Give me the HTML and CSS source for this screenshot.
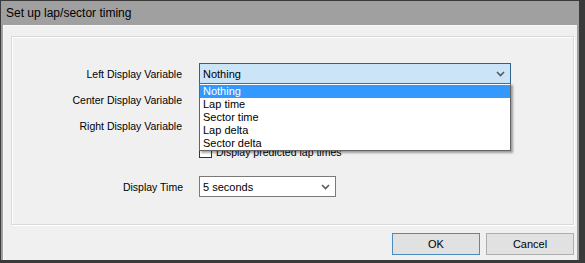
FILE: index.html
```html
<!DOCTYPE html>
<html lang="en">
<head>
	<meta charset="UTF-8">
	<title>Set up lap/sector timing</title>
	<link rel="stylesheet" href="styles.css">
</head>
<body>

<div class="window">
	<div class="title_bar">Set up lap/sector timing</div>
	<div class="client">
		<div class="group_box">
			<div class="form_row">
				<label class="lbl">Left Display Variable</label>
				<div class="combo combo_open">
					<span class="combo_txt">Nothing</span>
					<svg class="chev" width="9" height="6" viewBox="0 0 9 6"><polyline points="1,1 4.5,4.5 8,1" fill="none" stroke="#5a5a5a" stroke-width="1.6"/></svg>
					<!-- open list of the combo -->
					<ul class="drop_list">
						<li class="sel">Nothing</li>
						<li>Lap time</li>
						<li>Sector time</li>
						<li>Lap delta</li>
						<li>Sector delta</li>
					</ul>
				</div>
			</div>
			<!-- these two combos sit under the open list -->
			<div class="form_row">
				<label class="lbl">Center Display Variable</label>
				<div class="combo"></div>
			</div>
			<div class="form_row">
				<label class="lbl">Right Display Variable</label>
				<div class="combo"></div>
			</div>
			<div class="form_row check_row">
				<span class="lbl"></span>
				<div class="check">
					<span class="check_box"></span>
					<span class="check_txt">Display predicted lap times</span>
				</div>
			</div>
			<div class="form_row time_row">
				<label class="lbl">Display Time</label>
				<div class="combo combo_small">
					<span class="combo_txt">5 seconds</span>
					<svg class="chev" width="9" height="6" viewBox="0 0 9 6"><polyline points="1,1 4.5,4.5 8,1" fill="none" stroke="#5a5a5a" stroke-width="1.6"/></svg>
				</div>
			</div>
		</div>
		<div class="btn_row">
			<span class="btn btn_default">OK</span>
			<span class="btn">Cancel</span>
		</div>
	</div>
</div>

</body>
</html>
```

FILE: styles.css
```css
*{margin:0; padding:0; box-sizing:border-box;}
body{ background:#3a3a3a; font-family:"Liberation Sans", Arial, sans-serif; font-size:10.5px; color:#000; }

/*窗口*/
.window{ width:585px; height:263px; background:#a0a0a0; border-style:solid; border-color:#3a3a3a; border-width:1px 6px 3px 1px; display:flex; flex-direction:column; }
.title_bar{ height:24px; line-height:25px; padding-left:5px; font-size:12px; color:#000; flex:none; }
.client{ flex:1; margin:0 2px 0 2px; background:#f0f0f0; border-top:1px solid #f8f8f8; border-left:1px solid #f8f8f8; padding:10px 3px 0 7px; }

/*分组框*/
.group_box{ height:189px; border:1px solid #d9d9d9; box-shadow:inset 1px 1px 0 #fff, 1px 1px 0 #fff; padding-top:26px; display:flex; flex-direction:column; gap:5px; }
.form_row{ display:grid; grid-template-columns:170px 312px; column-gap:17px; align-items:center; }
.lbl{ text-align:right; white-space:nowrap; }

/*下拉框*/
.combo{ position:relative; height:21px; background:#fff; border:1px solid #7a7a7a; padding-left:3px; display:flex; align-items:center; justify-content:space-between; padding-right:5px; font-size:11px; }
.combo_open{ background:#cce4f7; border-color:#2c628b; z-index:3; }
.combo_small{ width:137px; }
.chev{ display:block; }
.drop_list{ position:absolute; top:19px; left:-1px; width:312px; height:68px; list-style:none; background:#fff; border:1px solid #646464; box-shadow:2px 2px 2px rgba(0,0,0,.35); padding-top:1px; }
.drop_list li{ height:13px; line-height:13px; padding-left:3px; }
.drop_list .sel{ background:#3399ff; color:#fff; }

/*复选框*/
.check_row{ margin-top:4px; }
.check{ display:flex; align-items:center; gap:4px; height:13px; }
.check_box{ width:13px; height:13px; border:1px solid #333; background:#fff; }
.time_row{ margin-top:13px; column-gap:16px; grid-template-columns:171px 137px; }

/*按钮*/
.btn_row{ display:flex; justify-content:flex-end; gap:6px; margin-top:8px; }
.btn{ width:88px; height:22px; line-height:20px; text-align:center; background:#e1e1e1; border:1px solid #adadad; font-size:11px; }
.btn_default{ border-color:#4b8bc0; }
```
